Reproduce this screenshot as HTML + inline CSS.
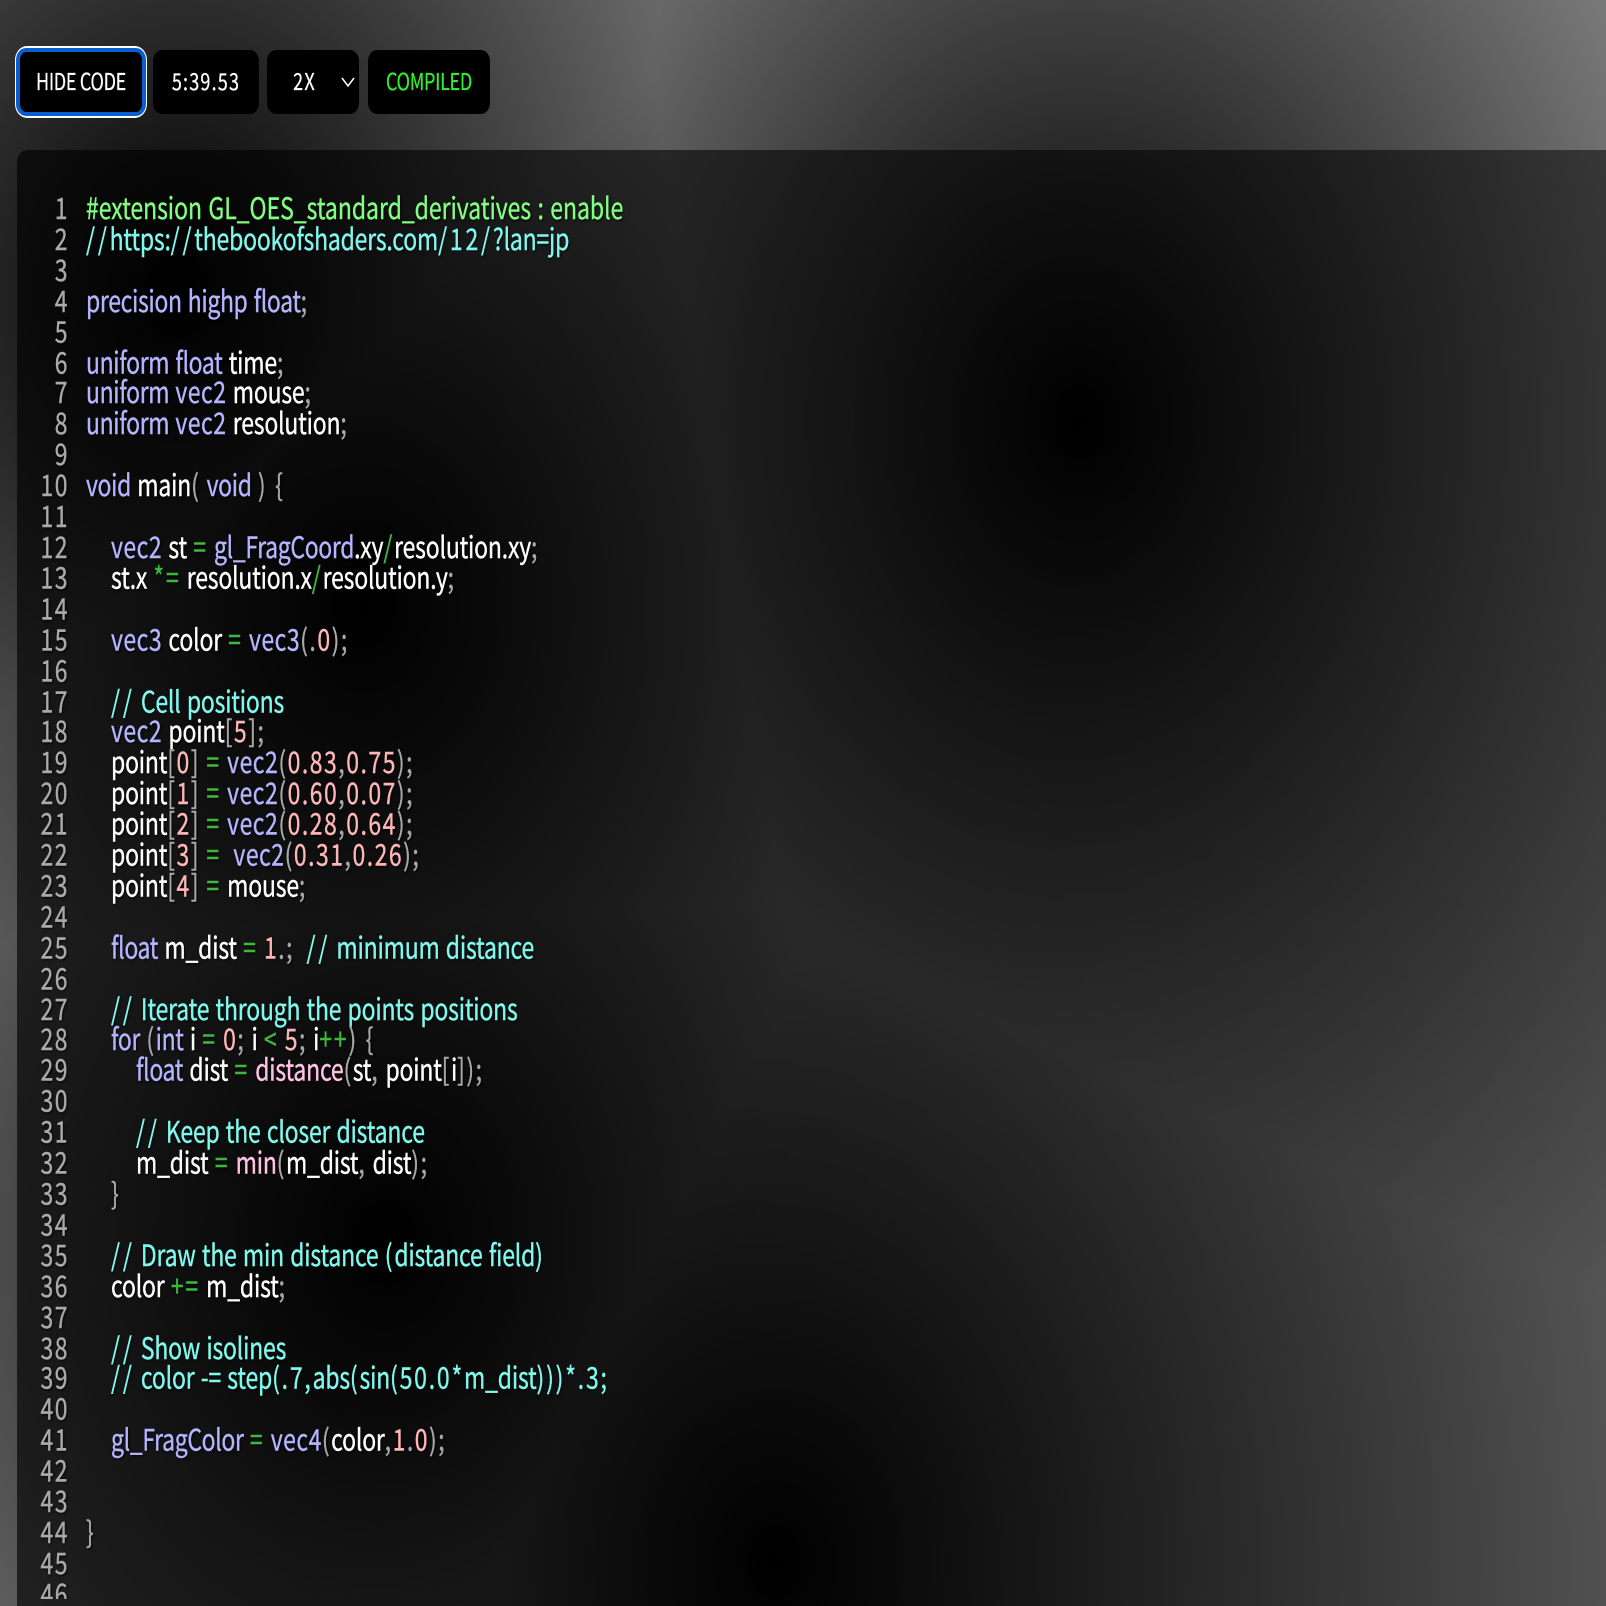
<!DOCTYPE html>
<html><head><meta charset="utf-8"><title>Shader</title>
<style>
html,body{margin:0;padding:0;width:1606px;height:1606px;overflow:hidden;background:#000}
#wrap{position:absolute;left:0;top:0;width:1606px;height:1606px;overflow:hidden}
#bg{position:absolute;left:0;top:0;width:1606px;height:1606px;
background-color:#fff;
background-image:
radial-gradient(ellipse 1301px 1676px at 1080px 422px,#000,#fff),
radial-gradient(ellipse 1301px 1676px at 775px 1562px,#000,#fff),
radial-gradient(ellipse 1301px 1676px at 364px 606px,#000,#fff),
radial-gradient(ellipse 1301px 1676px at 385px 1243px,#000,#fff),
radial-gradient(ellipse 1301px 1676px at 178px 295px,#000,#fff);
background-blend-mode:darken,darken,darken,darken,darken}
#panel{position:absolute;left:17px;top:150px;width:1589px;height:1456px;background:linear-gradient(90deg,rgba(0,0,0,.64),rgba(0,0,0,.5));border-radius:10px 0 0 0/13px 0 0 0}
.btn{position:absolute;top:50px;height:64px;background:#000;border-radius:9px/11px;color:#fff;overflow:hidden}
.btn span{position:absolute;left:0;right:0;top:0;text-align:center;white-space:nowrap;font:18px/49.7px "Noto Sans CJK JP","Liberation Sans",sans-serif;transform-origin:0 0;transform:scale(1,1.288);-webkit-text-stroke:.2px currentColor}
#code{position:absolute;left:0;top:192px;width:1000px;height:1407px;overflow:hidden}
#inner{position:absolute;left:0;top:0;transform-origin:0 0;transform:scale(1,1.288);font:23px/23.91px "Noto Sans CJK JP","Liberation Sans",sans-serif;color:#fff;text-shadow:1px 1px 2px rgba(0,0,0,.9);word-spacing:1.3px;-webkit-text-stroke:.3px currentColor;letter-spacing:-.2px}
.l{position:relative;height:23.91px;padding-left:86px;white-space:pre}
.l i{position:absolute;left:0;width:69px;text-align:right;font-style:normal;color:#aaa;top:0;letter-spacing:1.5px}
.k{color:#b4b4ff;letter-spacing:-.35px}.c{color:#7ff8ee}.p{color:#80ff80;letter-spacing:-.03px}.o{color:#3db83d;letter-spacing:1.8px}.n{color:#ffb6b6;letter-spacing:1.5px}.b{color:#ffc2e4}.g{color:#a8a8a8;letter-spacing:1.5px}.s{letter-spacing:2.8px}.v{letter-spacing:.5px}.d{letter-spacing:1.8px}
</style></head><body>
<div id="wrap">
<div id="bg"></div>
<div id="panel"></div>
<div style="position:absolute;left:15px;top:46px;width:132px;height:72px;box-sizing:border-box;background:#fff;border-radius:12px/14px"></div>
<div style="position:absolute;left:16px;top:48px;width:130px;height:68px;box-sizing:border-box;background:#000;border:4px solid #0a5fd0;border-radius:10px/12px"></div>
<div class="btn" style="left:17px;width:128px;background:none"><span style="letter-spacing:-.3px">HIDE CODE</span></div>
<div class="btn" style="left:153px;width:106px"><span style="letter-spacing:1.2px">5:39.53</span></div>
<div class="btn" style="left:267px;width:92px"><span style="right:17px;letter-spacing:1.2px">2X</span>
<svg style="position:absolute;left:73px;top:26px" width="16" height="12" viewBox="0 0 16 12"><path d="M2 2 L8 10 L14 2" fill="none" stroke="#fff" stroke-width="1.5"/></svg></div>
<div class="btn" style="left:368px;width:122px;color:#30f030"><span style="letter-spacing:-.3px">COMPILED</span></div>
<div id="code"><div id="inner"><div class="l"><i>1</i><span class="p">#extension GL_OES_standard_derivatives : enable</span></div><div class="l"><i>2</i><span class="c"><span class="s">//</span>https:<span class="s">//</span>thebookofshaders.com<span class="s">/12/</span>?lan=jp</span></div><div class="l"><i>3</i></div><div class="l"><i>4</i><span class="k">precision highp float</span><span class="g">;</span></div><div class="l"><i>5</i></div><div class="l"><i>6</i><span class="k">uniform float</span> time<span class="g">;</span></div><div class="l"><i>7</i><span class="k">uniform <span class="v">vec2</span></span> mouse<span class="g">;</span></div><div class="l"><i>8</i><span class="k">uniform <span class="v">vec2</span></span> resolution<span class="g">;</span></div><div class="l"><i>9</i></div><div class="l"><i>10</i><span class="k">void</span> main<span class="g">(</span> <span class="k">void</span> <span class="g">) {</span></div><div class="l"><i>11</i></div><div class="l"><i>12</i>    <span class="k v">vec2</span> st <span class="o">=</span> <span class="k">gl_FragCoord</span>.xy<span class="o">/</span>resolution.xy<span class="g">;</span></div><div class="l"><i>13</i>    st.x <span class="o">*=</span> resolution.x<span class="o">/</span>resolution.y<span class="g">;</span></div><div class="l"><i>14</i></div><div class="l"><i>15</i>    <span class="k v">vec3</span> color <span class="o">=</span> <span class="k v">vec3</span><span class="g">(.</span><span class="n">0</span><span class="g">);</span></div><div class="l"><i>16</i></div><div class="l"><i>17</i>    <span class="c"><span class="s">//</span> Cell positions</span></div><div class="l"><i>18</i>    <span class="k v">vec2</span> point<span class="g">[</span><span class="n">5</span><span class="g">];</span></div><div class="l"><i>19</i>    point<span class="g">[</span><span class="n">0</span><span class="g">]</span> <span class="o">=</span> <span class="k v">vec2</span><span class="g">(</span><span class="n">0.83</span><span class="g">,</span><span class="n">0.75</span><span class="g">);</span></div><div class="l"><i>20</i>    point<span class="g">[</span><span class="n">1</span><span class="g">]</span> <span class="o">=</span> <span class="k v">vec2</span><span class="g">(</span><span class="n">0.60</span><span class="g">,</span><span class="n">0.07</span><span class="g">);</span></div><div class="l"><i>21</i>    point<span class="g">[</span><span class="n">2</span><span class="g">]</span> <span class="o">=</span> <span class="k v">vec2</span><span class="g">(</span><span class="n">0.28</span><span class="g">,</span><span class="n">0.64</span><span class="g">);</span></div><div class="l"><i>22</i>    point<span class="g">[</span><span class="n">3</span><span class="g">]</span> <span class="o">=</span>  <span class="k v">vec2</span><span class="g">(</span><span class="n">0.31</span><span class="g">,</span><span class="n">0.26</span><span class="g">);</span></div><div class="l"><i>23</i>    point<span class="g">[</span><span class="n">4</span><span class="g">]</span> <span class="o">=</span> mouse<span class="g">;</span></div><div class="l"><i>24</i></div><div class="l"><i>25</i>    <span class="k">float</span> m_dist <span class="o">=</span> <span class="n">1</span><span class="g">.;</span>  <span class="c"><span class="s">//</span> minimum distance</span></div><div class="l"><i>26</i></div><div class="l"><i>27</i>    <span class="c"><span class="s">//</span> Iterate through the points positions</span></div><div class="l"><i>28</i>    <span class="k">for</span> <span class="g">(</span><span class="k">int</span> i <span class="o">=</span> <span class="n">0</span><span class="g">;</span> i <span class="o">&lt;</span> <span class="n">5</span><span class="g">;</span> i<span class="o">++</span><span class="g">) {</span></div><div class="l"><i>29</i>        <span class="k">float</span> dist <span class="o">=</span> <span class="b">distance</span><span class="g">(</span>st<span class="g">,</span> point<span class="g">[</span>i<span class="g">]);</span></div><div class="l"><i>30</i></div><div class="l"><i>31</i>        <span class="c"><span class="s">//</span> Keep the closer distance</span></div><div class="l"><i>32</i>        m_dist <span class="o">=</span> <span class="b">min</span><span class="g">(</span>m_dist<span class="g">,</span> dist<span class="g">);</span></div><div class="l"><i>33</i>    <span class="g">}</span></div><div class="l"><i>34</i></div><div class="l"><i>35</i>    <span class="c"><span class="s">//</span> Draw the min distance <span class="d">(</span>distance field<span class="d">)</span></span></div><div class="l"><i>36</i>    color <span class="o">+=</span> m_dist<span class="g">;</span></div><div class="l"><i>37</i></div><div class="l"><i>38</i>    <span class="c"><span class="s">//</span> Show isolines</span></div><div class="l"><i>39</i>    <span class="c"><span class="s">//</span> color -= step<span class="d">(.7,</span>abs<span class="d">(</span>sin<span class="d">(50.0*</span>m_dist<span class="d">)))*.3;</span></span></div><div class="l"><i>40</i></div><div class="l"><i>41</i>    <span class="k">gl_FragColor</span> <span class="o">=</span> <span class="k v">vec4</span><span class="g">(</span>color<span class="g">,</span><span class="n">1</span><span class="g">.</span><span class="n">0</span><span class="g">);</span></div><div class="l"><i>42</i></div><div class="l"><i>43</i></div><div class="l"><i>44</i><span class="g">}</span></div><div class="l"><i>45</i></div><div class="l"><i>46</i></div></div></div>
</div>
</body></html>
